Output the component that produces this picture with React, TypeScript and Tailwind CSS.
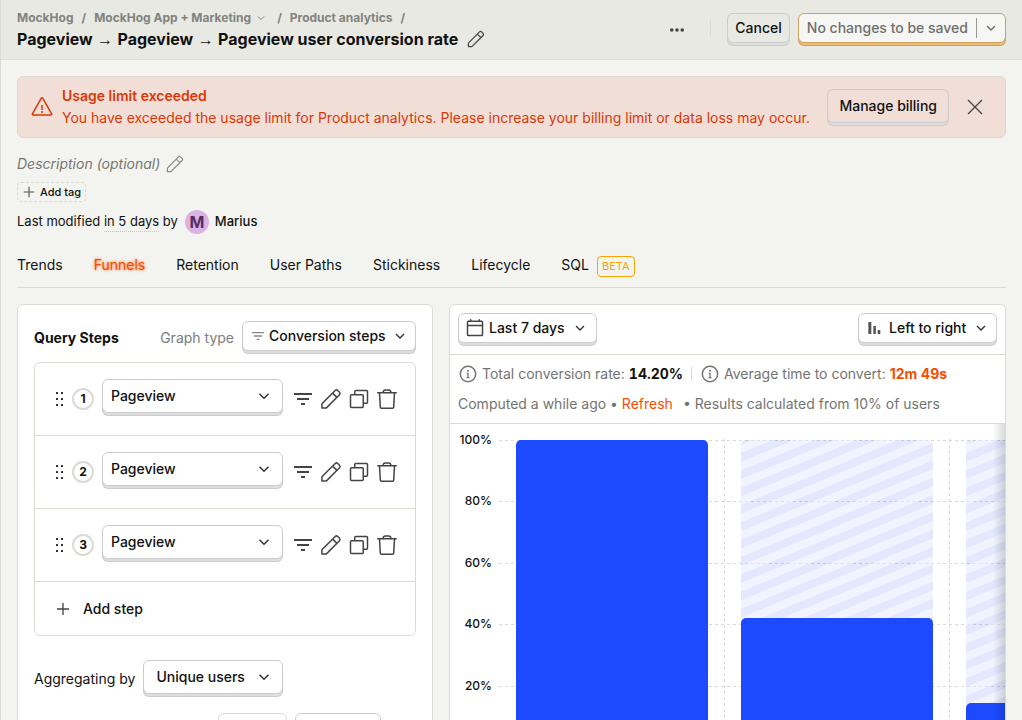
import React from 'react'

const FONT = "font-['Inter','Liberation_Sans',sans-serif]"

const frame =
  'rounded-md border border-[#ccc] font-medium text-[#111] shadow-[0_3px_0_-1px_#e0dde0,0_3px_0_0_#cccccc]'

type IconProps = { className?: string }

function Svg({ className = 'size-6', children }: IconProps & { children: React.ReactNode }) {
  return (
    <svg
      viewBox="0 0 24 24"
      className={`shrink-0 ${className}`}
      fill="none"
      stroke="currentColor"
      strokeWidth="1.5"
      aria-hidden="true"
    >
      {children}
    </svg>
  )
}

const Pencil = ({ className }: IconProps) => (
  <Svg className={className}>
    <path
      strokeLinejoin="round"
      d="M2.9 21.1v-3.6c0-.5.2-.9.5-1.2L16.2 3.5a1.8 1.8 0 0 1 2.5 0l1.8 1.8a1.8 1.8 0 0 1 0 2.5L7.7 20.6c-.3.3-.7.5-1.2.5zM13.6 6.1l4.3 4.3"
    />
  </Svg>
)

const Chevron = ({ className }: IconProps) => (
  <Svg className={className}>
    <path d="M6 9l6 6 6-6" strokeWidth="2" />
  </Svg>
)

const Copy = ({ className }: IconProps) => (
  <Svg className={className}>
    <rect x="3.5" y="7.75" width="12.75" height="12.75" rx="1" />
    <path d="M7.75 7.5V4.5a1 1 0 0 1 1-1H19.5a1 1 0 0 1 1 1v10.75a1 1 0 0 1-1 1h-3" />
  </Svg>
)

const Trash = ({ className }: IconProps) => (
  <Svg className={className}>
    <path d="M2.25 5.75h19.5M8 5.5C8.2 3.9 9 3 10.3 3h3.4c1.3 0 2.1.9 2.3 2.5M4.5 5.75l.8 14.3a1.2 1.2 0 0 0 1.2 1.15h11a1.2 1.2 0 0 0 1.2-1.15l.8-14.3" />
  </Svg>
)

const Filter = ({ className }: IconProps) => (
  <Svg className={className}>
    <path d="M3 6h18v2H3zM6 11h12v2H6zM10 16h4v2h-4z" fill="currentColor" stroke="none" />
  </Svg>
)

const Plus = ({ className }: IconProps) => (
  <Svg className={className}>
    <path d="M12 3v18M3 12h18" strokeWidth="2" />
  </Svg>
)

const Close = ({ className }: IconProps) => (
  <Svg className={className}>
    <path d="M5 5l14 14M19 5L5 19" strokeWidth="1.3" />
  </Svg>
)

const Warning = ({ className }: IconProps) => (
  <Svg className={className}>
    <path
      strokeLinejoin="round"
      d="M11.3 3.1a.8.8 0 0 1 1.4 0l8.9 15.7a.8.8 0 0 1-.7 1.2H3.1a.8.8 0 0 1-.7-1.2zM12 10v5"
    />
    <circle cx="12" cy="17" r="1" fill="currentColor" stroke="none" />
  </Svg>
)

const Info = ({ className }: IconProps) => (
  <Svg className={className}>
    <circle cx="12" cy="12" r="9.2" strokeWidth="1.8" />
    <path d="M10.4 11.2H12v5M10.2 16.4h3.6" strokeWidth="1.6" />
    <circle cx="12" cy="8" r="1.2" fill="currentColor" stroke="none" />
  </Svg>
)

const Calendar = ({ className }: IconProps) => (
  <Svg className={className}>
    <rect x="3" y="4" width="18" height="17" rx="1" strokeWidth="1.8" />
    <path d="M3 9h18M6.8 1.5v3M17.2 1.5v3" strokeWidth="1.8" />
  </Svg>
)

const Bars = ({ className }: IconProps) => (
  <Svg className={className}>
    <path d="M3.5 3H8v18H3.5zM11 9h3.8v12H11zM17.5 15h4v6h-4z" fill="currentColor" stroke="none" />
  </Svg>
)

const Dots = ({ className }: IconProps) => (
  <Svg className={className}>
    <g fill="currentColor" stroke="none">
      <circle cx="5" cy="12" r="2.4" />
      <circle cx="12" cy="12" r="2.4" />
      <circle cx="19" cy="12" r="2.4" />
    </g>
  </Svg>
)

const DragHandle = () => (
  <svg viewBox="0 0 8 16" className="h-4 w-2 shrink-0" fill="#222" aria-hidden="true">
    {[1, 7, 13].map((y) => (
      <React.Fragment key={y}>
        <rect x="0" y={y} width="2" height="2" rx="0.5" />
        <rect x="5" y={y} width="2" height="2" rx="0.5" />
      </React.Fragment>
    ))}
  </svg>
)

const Arrow = () => <span className="font-['Liberation_Sans',sans-serif] font-normal"> → </span>

function Select({
  label,
  value,
  id,
  className,
  wrapper = '',
  chevron = 'right-2 size-4',
  icon,
}: {
  label?: string
  value: string
  id?: string
  className: string
  wrapper?: string
  chevron?: string
  icon?: React.ReactNode
}) {
  return (
    <span className={`relative flex items-center ${wrapper}`}>
      {icon}
      <select
        id={id}
        aria-label={label}
        defaultValue={value}
        className={`w-full appearance-none bg-white text-sm ${frame} ${className}`}
      >
        <option>{value}</option>
      </select>
      <Chevron className={`pointer-events-none absolute text-[#333] ${chevron}`} />
    </span>
  )
}

function Header() {
  return (
    <header className="flex items-start justify-between border-b border-[#dfe0d9] bg-[#e8e9e3] px-4 pb-[9px] pt-2">
      <div>
        <nav aria-label="Breadcrumb" className="flex h-5 items-center gap-2 text-xs font-bold text-[#82837e]">
          <a href="#home">MockHog</a>
          <span>/</span>
          <button type="button" className="flex items-center gap-1 pr-0.5">
            MockHog App + Marketing
            <Chevron className="size-3" />
          </button>
          <span>/</span>
          <a href="#analytics">Product analytics</a>
          <span>/</span>
        </nav>
        <div className="flex h-[22px] items-center gap-2">
          <h1 className="text-base font-bold leading-[22px] text-[#111]">
            Pageview
            <Arrow />
            Pageview
            <Arrow />
            Pageview user conversion rate
          </h1>
          <button type="button" aria-label="Edit name" className="text-[#444]">
            <Pencil className="size-5" />
          </button>
        </div>
      </div>
      <div className="flex items-center pt-1">
        <button type="button" aria-label="More" className="mr-6 mt-1 text-[#444]">
          <Dots className="size-[18px]" />
        </button>
        <span className="mr-4 h-4 w-px bg-[#dadbd2]" />
        <div className="flex gap-2 pt-px">
          <button type="button" className={`h-[30px] px-[7px] text-sm ${frame}`}>
            Cancel
          </button>
          <div className="flex h-[30px] items-center rounded-md border border-[#cba15f] bg-[#f6f6f4] text-sm font-medium text-[#6f6f6d] shadow-[0_3px_0_-1px_#efbc76,0_3px_0_0_#cba15f]">
            <button type="button" disabled className="px-2">
              No changes to be saved
            </button>
            <span className="h-5 w-px bg-[#999]" />
            <button type="button" aria-label="Save options" className="flex h-full w-7 items-center justify-center">
              <Chevron className="size-4" />
            </button>
          </div>
        </div>
      </div>
    </header>
  )
}

function Banner() {
  return (
    <section className="flex items-center rounded-md border border-[#dcd9d0] bg-[#f1dfd7] py-2 pl-3 pr-[18px] text-sm leading-[22px] text-[#db3707]">
      <Warning className="size-6" />
      <div className="ml-2 flex-1">
        <strong className="block font-semibold">Usage limit exceeded</strong>
        <p>
          You have exceeded the usage limit for Product analytics. Please increase your billing limit or data loss may
          occur.
        </p>
      </div>
      <button type="button" className={`mb-[3px] h-[34px] px-[11px] ${frame}`}>
        Manage billing
      </button>
      <button type="button" aria-label="Dismiss" className="ml-3.5 text-[#444]">
        <Close className="size-6" />
      </button>
    </section>
  )
}

function Meta() {
  return (
    <div className="flex flex-col text-[#111]">
      <div className="mt-4 flex h-5 items-center gap-[5px] text-sm italic text-[#767773]">
        Description (optional)
        <button type="button" aria-label="Edit description" className="text-[#8a8b86]">
          <Pencil className="size-5" />
        </button>
      </div>
      <button
        type="button"
        className="mt-2 flex h-5 items-center gap-1 self-start rounded border border-dashed border-[#dadbd2] px-1 text-[11px] font-medium"
      >
        <Plus className="size-3.5 text-[#555]" />
        Add tag
      </button>
      <div className="mt-2 flex h-6 items-center text-[13px]">
        Last modified&nbsp;
        <span className="border-b border-dotted border-[#c5c6be]">in 5 days</span>
        &nbsp;by
        <span className="ml-[7px] mr-1.5 flex size-6 items-center justify-center rounded-full bg-[#dcb1e3] text-base font-bold text-[#572e5e]">
          M
        </span>
        <span className="font-medium">Marius</span>
      </div>
    </div>
  )
}

const TABS = ['Trends', 'Funnels', 'Retention', 'User Paths', 'Stickiness', 'Lifecycle', 'SQL']

function Tabs() {
  return (
    <div
      role="tablist"
      className="mt-2 flex h-[46px] items-center gap-[31px] border-b border-[#dadbd2] text-sm text-[#111]"
    >
      {TABS.map((tab) => (
        <button
          key={tab}
          type="button"
          role="tab"
          aria-selected={tab === 'Funnels'}
          className={
            tab === 'Funnels'
              ? 'text-[#f54e00] [text-shadow:0_0_3px_#f54e00]'
              : tab === 'SQL'
                ? 'flex items-center gap-2'
                : ''
          }
        >
          {tab}
          {tab === 'SQL' && (
            <span className="mt-1 rounded border border-[#f7a501] px-1 text-[11px] leading-[19px] text-[#f7a501]">
              BETA
            </span>
          )}
        </button>
      ))}
    </div>
  )
}

function StepRow({ index }: { index: number }) {
  const action = 'flex w-7 justify-center'
  return (
    <li className="flex h-[73px] items-center border-b border-[#dadbd2] pl-[21px] pr-3.5">
      <DragHandle />
      <span className="ml-2 flex size-[22px] shrink-0 items-center justify-center rounded-full border-2 border-[#dadbd2] text-xs font-bold">
        {index}
      </span>
      <Select
        label={`Step ${index} event`}
        value="Pageview"
        wrapper="mx-2 mb-1.5 min-w-0 flex-1"
        className="h-[34px] px-2"
        chevron="right-2.5 size-[18px]"
      />
      <div className="-ml-0.5 flex text-[#444]">
        <button type="button" aria-label="Show filters" className={action}>
          <Filter />
        </button>
        <button type="button" aria-label="Rename step" className={action}>
          <Pencil />
        </button>
        <button type="button" aria-label="Duplicate step" className={action}>
          <Copy />
        </button>
        <button type="button" aria-label="Delete step" className={action}>
          <Trash />
        </button>
      </div>
    </li>
  )
}

function QueryPanel() {
  return (
    <section className="rounded-md border border-[#dadbd2] bg-white p-4 text-sm text-[#111]">
      <div className="flex h-[41px] items-start justify-between">
        <h2 className="pt-2 font-bold leading-[18px]">Query Steps</h2>
        <div className="flex items-start gap-2">
          <label htmlFor="graph-type" className="pt-2 leading-[18px] text-[#7c7c7a]">
            Graph type
          </label>
          <Select
            id="graph-type"
            value="Conversion steps"
            className="h-[30px] pl-[26px] pr-[29px]"
            icon={<Filter className="pointer-events-none absolute left-2 size-4 text-[#888]" />}
          />
        </div>
      </div>
      <div className="rounded-md border border-[#dadbd2]">
        <ol>
          {[1, 2, 3].map((n) => (
            <StepRow key={n} index={n} />
          ))}
        </ol>
        <button type="button" className="flex h-[53px] items-center gap-3 pl-5 font-medium">
          <Plus className="size-4 text-[#444]" />
          Add step
        </button>
      </div>
      <div className="mt-6 flex items-start gap-2">
        <label htmlFor="aggregation" className="pt-2.5 leading-[18px]">
          Aggregating by
        </label>
        <Select
          id="aggregation"
          value="Unique users"
          className="h-[34px] pl-3 pr-[37px]"
          chevron="right-2.5 size-[18px]"
        />
      </div>
      <div className="mt-[19px] flex items-start gap-2 pl-[184px]">
        <input
          type="number"
          aria-label="Conversion window"
          className="h-10 w-[69px] rounded-md border border-[#dadbd2] px-2"
        />
        <Select label="Window unit" value="" wrapper="w-[86px]" className="h-[34px] px-3" />
      </div>
    </section>
  )
}

const TOP = 16
const HEIGHT = 307
const BASE = TOP + HEIGHT
const BAR = 192
const STEP = 225
const FIRST = 66

function topRounded(x: number, y: number) {
  return `M${x} ${BASE}V${y + 5}a5 5 0 0 1 5-5h${BAR - 10}a5 5 0 0 1 5 5V${BASE}z`
}

function FunnelChart() {
  const steps = [1, 0.42, 0.142]
  const ticks = [100, 80, 60, 40, 20]
  return (
    <div className="relative overflow-hidden">
      <svg className="block h-[340px] w-full" role="img" aria-label="Conversion by step">
        <defs>
          {steps.map((_, i) => (
            <pattern
              key={i}
              id={`stripes-${i}`}
              width="16"
              height="16"
              patternUnits="userSpaceOnUse"
              patternTransform={`translate(${FIRST + STEP * i + BAR} ${BASE - 1}) rotate(-22.5)`}
            >
              <rect width="16" height="16" fill="#1d4aff" fillOpacity="0.125" />
              <rect width="16" height="8" fill="#fff" fillOpacity="0.5" />
            </pattern>
          ))}
        </defs>
        <g stroke="#dadbd2" strokeDasharray="3 3" shapeRendering="crispEdges">
          {ticks.map((t) => {
            const y = Math.round(TOP + HEIGHT * (1 - t / 100)) + 0.5
            return <line key={t} x1="49" x2="2000" y1={y} y2={y} />
          })}
          {[1, 2].map((i) => (
            <line key={i} x1={STEP * i + 49.5} x2={STEP * i + 49.5} y1={TOP - 1} y2={BASE} />
          ))}
        </g>
        <g className="text-xs font-medium" fill="#111" textAnchor="end">
          {ticks.map((t) => (
            <text key={t} x="42" y={Math.round(TOP + HEIGHT * (1 - t / 100)) + 4}>
              {t}%
            </text>
          ))}
        </g>
        {steps.map((rate, i) => (
          <g key={i}>
            {rate < 1 && <path d={topRounded(FIRST + STEP * i, TOP)} fill={`url(#stripes-${i})`} />}
            <path d={topRounded(FIRST + STEP * i, Math.round(BASE - HEIGHT * rate))} fill="#1d4aff" />
          </g>
        ))}
      </svg>
      <div className="pointer-events-none absolute inset-y-0 right-0 w-3 bg-linear-to-l from-black/15 to-transparent" />
    </div>
  )
}

function ResultsPanel() {
  return (
    <section className="min-w-0 overflow-hidden rounded-md border border-[#dadbd2] bg-white text-sm text-[#747472]">
      <div className="flex h-[50px] items-start justify-between border-b border-[#dadbd2] p-2">
        <button type="button" className={`flex h-[30px] items-center pl-1.5 pr-2 ${frame}`}>
          <Calendar className="mr-1 size-5 text-[#444]" />
          Last 7 days
          <Chevron className="ml-[7px] size-4 text-[#333]" />
        </button>
        <Select
          label="Layout"
          value="Left to right"
          className="h-[30px] pl-[30px] pr-[29px]"
          icon={<Bars className="pointer-events-none absolute left-2 size-4 text-[#555]" />}
        />
      </div>
      <div className="border-b border-[#dadbd2] px-2 pb-1 pt-1">
        <div className="flex h-[30px] items-center">
          <Info className="mr-1 size-5" />
          Total conversion rate:
          <strong className="ml-1 font-bold tabular-nums text-[#111]">14.20%</strong>
          <span className="mx-2 h-3.5 w-px bg-[#dadbd2]" />
          <Info className="mr-1 size-5" />
          Average time to convert:
          <a href="#times" className="ml-1 font-bold text-[#f54e00]">
            12m 49s
          </a>
        </div>
        <div className="flex h-[30px] items-center">
          Computed a while ago&nbsp;•&nbsp;
          <button type="button" className="text-[#f54e00]">
            Refresh
          </button>
          <span className="ml-2.5">• Results calculated from 10% of users</span>
        </div>
      </div>
      <FunnelChart />
    </section>
  )
}

export default function App() {
  return (
    <div className={`h-screen overflow-hidden border-l border-[#dadbd2] bg-[#f3f4ef] leading-normal ${FONT}`}>
      <Header />
      <main className="p-4">
        <Banner />
        <Meta />
        <Tabs />
        <div className="mt-4 grid grid-cols-[416px_minmax(0,1fr)] gap-4">
          <QueryPanel />
          <ResultsPanel />
        </div>
      </main>
    </div>
  )
}
